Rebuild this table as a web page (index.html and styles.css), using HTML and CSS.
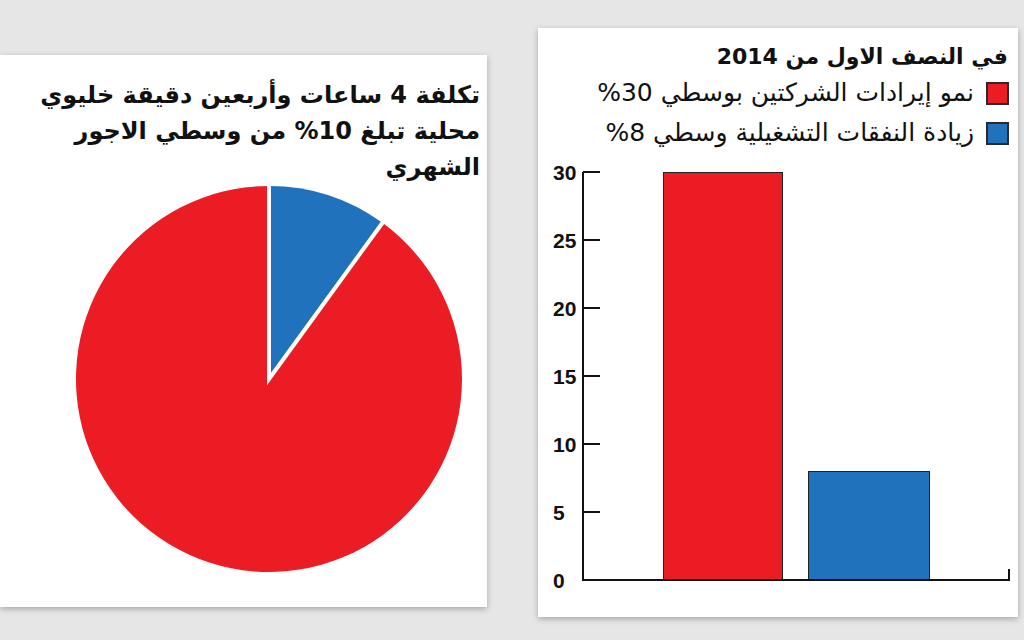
FILE: index.html
```html
<!DOCTYPE html>
<html lang="ar">
<head>
<meta charset="utf-8">
<link rel="stylesheet" href="styles.css">
</head>
<body>
<div class="stage">
  <section class="panel pie-panel">
    <h2 class="pie-title" dir="rtl">تكلفة 4 ساعات وأربعين دقيقة خليوي<br>محلية تبلغ 10% من وسطي الاجور<br>الشهري</h2>
    <svg class="pie" width="390" height="390" viewBox="-195 -195 390 390">
      <path d="M0 0 L113.44 -156.14 A193 193 0 1 1 0 -193 Z" fill="#ec1c24"/>
      <path d="M0 0 L0 -193 A193 193 0 0 1 113.44 -156.14 Z" fill="#1f72bb"/>
      <path d="M0 -195 L0 0 L114.6 -157.8" fill="none" stroke="#fff" stroke-width="4" stroke-linejoin="miter"/>
    </svg>
  </section>
  <section class="panel bar-panel">
    <h2 class="bar-title" dir="rtl">في النصف الاول من 2014</h2>
    <ul class="legend" dir="rtl">
      <li class="legend-item"><span class="swatch red"></span><span class="legend-text">نمو إيرادات الشركتين بوسطي 30%</span></li>
      <li class="legend-item"><span class="swatch blue"></span><span class="legend-text">زيادة النفقات التشغيلية وسطي 8%</span></li>
    </ul>
    <svg class="bars" width="480" height="440" viewBox="0 0 480 440">
      <rect x="125.5" y="10.5" width="119" height="408" fill="#ec1c24" stroke="#222" stroke-width="1"/>
      <rect x="270.5" y="309.5" width="121" height="109" fill="#1f72bb" stroke="#222" stroke-width="1"/>
      <g stroke="#111" stroke-width="2" fill="none">
        <path d="M45 10 L45 418 L471 418 L471 407"/>
        <path d="M45 10 H62 M45 78 H62 M45 146 H62 M45 214 H62 M45 282 H62 M45 350 H62"/>
      </g>
      <g class="ticks">
        <text x="15" y="18">30</text>
        <text x="15" y="86">25</text>
        <text x="15" y="154">20</text>
        <text x="15" y="222">15</text>
        <text x="15" y="290">10</text>
        <text x="15" y="358">5</text>
        <text x="15" y="426">0</text>
      </g>
    </svg>
  </section>
</div>
</body>
</html>
```

FILE: styles.css
```css
html, body {
  margin: 0;
  padding: 0;
}
body {
  background: #e6e6e6;
  width: 1024px;
  height: 640px;
  overflow: hidden;
  font-family: "DejaVu Sans", "Liberation Sans", sans-serif;
}
.stage {
  display: flex;
  align-items: flex-start;
  gap: 51px;
}
.panel {
  background: #fff;
  box-shadow: 0 2px 6px rgba(0, 0, 0, 0.28);
  box-sizing: border-box;
}
.pie-panel {
  width: 487px;
  height: 552px;
  margin-top: 55px;
  display: flex;
  flex-direction: column;
}
.pie-title {
  margin: 0;
  padding: 22px 7px 0 0;
  font-size: 24px;
  line-height: 36px;
  font-weight: bold;
  color: #111;
  text-align: right;
}
.pie {
  display: block;
  margin: -1px 0 0 74px;
}
.bar-panel {
  width: 480px;
  height: 589px;
  margin-top: 28px;
  display: flex;
  flex-direction: column;
}
.bar-title {
  margin: 0;
  padding: 14px 10px 0 0;
  font-size: 22px;
  line-height: 30px;
  font-weight: bold;
  color: #111;
  text-align: right;
}
.legend {
  list-style: none;
  margin: 4px 0 0;
  padding: 0 9px 0 0;
  display: flex;
  flex-direction: column;
  gap: 6px;
}
.legend-item {
  display: flex;
  align-items: center;
  gap: 12px;
  height: 34px;
}
.swatch {
  width: 23px;
  height: 23px;
  box-sizing: border-box;
  border: 2px solid #2a2a2a;
  flex: none;
}
.swatch.red { background: #ec1c24; }
.swatch.blue { background: #1f72bb; }
.legend-text {
  font-size: 25px;
  line-height: 34px;
  color: #111;
}
.bars {
  display: block;
  margin-top: 12px;
}
.ticks text {
  font-family: "Liberation Sans", Arial, sans-serif;
  font-weight: bold;
  font-size: 21px;
  fill: #111;
}
```
